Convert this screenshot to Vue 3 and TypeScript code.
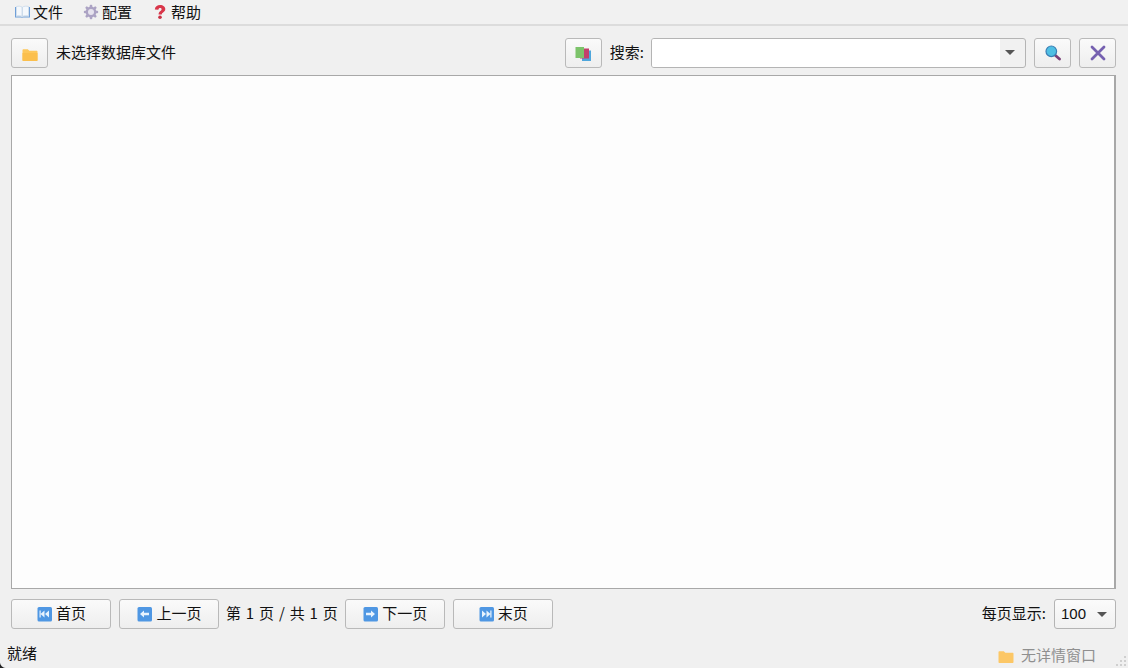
<script setup lang="ts">
const menus = [
  { label: '文件', icon: 'book' },
  { label: '配置', icon: 'gear' },
  { label: '帮助', icon: 'help' },
]
</script>

<template>
  <div class="win">
    <div class="menubar">
      <div v-for="m in menus" :key="m.label" class="menu-item">
        <svg v-if="m.icon === 'book'" class="ico" viewBox="0 0 16 16">
          <path d="M1 3v10.500h6.500l.5.5.5-.5H16V3h-1v9.500H9l-1 .6-1-.6H2V3z" fill="#6f9fd8" />
          <path d="M2.500 2.500c2-.5 4-.5 5.500.6V12.300c-1.600-.8-3.500-.8-5.500-.4zM14.500 2.500c-2-.5-4.500-.5-6 .6V12.300c1.600-.8 4-.8 6-.4z" fill="#f4f8fc" stroke="#c3d5e8" stroke-width=".7" />
        </svg>
        <svg v-else-if="m.icon === 'gear'" class="ico" viewBox="0 0 16 16">
          <g fill="#aca3c4">
            <circle cx="8" cy="8" r="5.400" />
            <rect x="6.700" y=".8" width="2.600" height="14.400" rx="1" />
            <rect x=".8" y="6.700" width="14.400" height="2.600" rx="1" />
            <rect x="6.700" y=".8" width="2.600" height="14.400" rx="1" transform="rotate(45 8 8)" />
            <rect x="6.700" y=".8" width="2.600" height="14.400" rx="1" transform="rotate(-45 8 8)" />
          </g>
          <circle cx="8" cy="8" r="3" fill="#e6e3ee" />
        </svg>
        <svg v-else class="ico" viewBox="0 0 16 16">
          <path d="M2.800 5.400C3 2.600 5.200 1 8.100 1c3 0 5.200 1.700 5.200 4 0 1.800-1 2.700-2.200 3.500-.9.600-1.300 1-1.300 2.100H6.600c0-1.900.6-2.800 1.700-3.600.8-.6 1.300-1 1.300-1.800 0-.8-.6-1.300-1.500-1.300-1 0-1.600.6-1.700 1.800z" fill="#d9364a" />
          <circle cx="8" cy="13.300" r="1.800" fill="#c92f43" />
        </svg>
        <span class="menu-text">{{ m.label }}</span>
      </div>
    </div>

    <div class="toolbar">
      <button class="btn square">
        <svg class="ico drop" viewBox="0 0 16 16"><path d="M.5 3.200c0-.6.4-1 1-1h4.300l1.500 1.500h7.200c.6 0 1 .4 1 1v8.300c0 .6-.4 1-1 1H1.500c-.6 0-1-.4-1-1z" fill="#fdc75b" /><path d="M.5 6h15v7c0 .6-.4 1-1 1h-13c-.6 0-1-.4-1-1z" fill="#fbbf4d" /></svg>
      </button>
      <span class="file-label txt">未选择数据库文件</span>
      <div class="spacer"></div>
      <button class="btn square">
        <svg class="ico drop-half" viewBox="0 0 16 16">
          <rect x="7" y="4.500" width="9" height="10.500" fill="#4ea6dc" />
          <rect x="5" y="2.500" width="9" height="10" fill="#c2406c" />
          <rect x=".5" y="1" width="8.500" height="11" fill="#7cc36a" />
        </svg>
      </button>
      <span class="search-label txt">搜索:</span>
      <div class="combo search">
        <div class="combo-field"></div>
        <div class="combo-arrow"></div>
      </div>
      <button class="btn square">
        <svg class="ico" viewBox="0 0 16 16">
          <path d="M10.500 10.500l4 3.500" stroke="#7a3f78" stroke-width="2.800" stroke-linecap="round" />
          <circle cx="6.300" cy="6.300" r="5.300" fill="#4fbfe4" stroke="#3a7fb5" stroke-width="1.200" />
        </svg>
      </button>
      <button class="btn square">
        <svg class="ico" viewBox="0 0 16 16"><path d="M2 2l12 12M14 2L2 14" stroke="#7560b0" stroke-width="2.800" stroke-linecap="round" /></svg>
      </button>
    </div>

    <div class="panel"></div>

    <div class="pager">
      <button class="btn page">
        <svg class="ico" viewBox="0 0 16 16"><rect x="1.500" y="1" width="14.500" height="14.500" rx="1.500" fill="#4f97e3" /><path d="M8.500 4.500L4.500 8l4 3.500zM13 4.500L9 8l4 3.500zM3.500 4.500h1.200v7H3.500z" fill="#e8f3fe" /></svg>
        <span class="txt">首页</span>
      </button>
      <button class="btn page">
        <svg class="ico" viewBox="0 0 16 16"><rect x="1.500" y="1" width="14.500" height="14.500" rx="1.500" fill="#4f97e3" /><path d="M8 4.500L4 8l4 3.500V9.300h5V6.700H8z" fill="#e8f3fe" /></svg>
        <span class="txt">上一页</span>
      </button>
      <span class="page-info txt">第 1 页 / 共 1 页</span>
      <button class="btn page">
        <svg class="ico" viewBox="0 0 16 16"><rect x="1.500" y="1" width="14.500" height="14.500" rx="1.500" fill="#4f97e3" /><path d="M9 4.500l4 3.500-4 3.500V9.300H4V6.700h5z" fill="#e8f3fe" /></svg>
        <span class="txt">下一页</span>
      </button>
      <button class="btn page">
        <svg class="ico" viewBox="0 0 16 16"><rect x="1.500" y="1" width="14.500" height="14.500" rx="1.500" fill="#4f97e3" /><path d="M4 4.500L8 8l-4 3.500zM8.500 4.500l4 3.500-4 3.500zM12.300 4.500h1.200v7h-1.200z" fill="#e8f3fe" /></svg>
        <span class="txt">末页</span>
      </button>
      <div class="spacer"></div>
      <span class="per-page txt">每页显示:</span>
      <div class="combo size">
        <span class="combo-value">100</span>
        <div class="combo-arrow plain"></div>
      </div>
    </div>

    <div class="statusbar">
      <span class="txt">就绪</span>
      <div class="spacer"></div>
      <div class="detail">
        <svg class="ico" viewBox="0 0 16 16"><path d="M.5 3.200c0-.6.4-1 1-1h4.300l1.500 1.500h7.200c.6 0 1 .4 1 1v8.300c0 .6-.4 1-1 1H1.500c-.6 0-1-.4-1-1z" fill="#fcc766" /></svg>
        <span class="txt">无详情窗口</span>
      </div>
      <div class="grip">
        <i v-for="n in 6" :key="n" :class="'g' + n"></i>
      </div>
    </div>
    <div class="corner"></div>
  </div>
</template>

<style>
html, body { margin: 0; padding: 0; background: #f0f0f0; }
</style>

<style scoped>
.win {
  position: relative;
  width: 1128px;
  height: 668px;
  overflow: hidden;
  display: flex;
  flex-direction: column;
  background: #f0f0f0;
  color: #111;
  font-family: "Noto Sans CJK SC", "Liberation Sans", sans-serif;
  font-size: 15px;
}
.ico { width: 16px; height: 16px; flex: none; display: block; }
.drop { margin-top: 3px; }
.drop-half { margin-top: 1px; }
.txt { padding-bottom: 3px; line-height: 20px; }
.menu-text { line-height: 20px; }
.spacer { flex: 1; }
.menubar {
  height: 24px;
  flex: none;
  display: flex;
  align-items: center;
  padding-left: 6px;
  gap: 4px;
  border-bottom: 2px solid #dcdcdc;
  background: #f1f1f1;
}
.menu-item {
  display: flex;
  align-items: center;
  gap: 3px;
  padding: 0 8px;
  height: 24px;
}
.toolbar {
  height: 30px;
  flex: none;
  margin-top: 12px;
  padding: 0 12px 0 11px;
  display: flex;
  align-items: center;
}
.btn {
  box-sizing: border-box;
  display: flex;
  align-items: center;
  justify-content: center;
  gap: 4px;
  height: 30px;
  padding: 0;
  border: 1px solid #b9b9b9;
  border-radius: 3px;
  background: linear-gradient(#fafafa, #eeeeee);
  color: inherit;
  font: inherit;
}
.square { width: 37px; }
.file-label { margin-left: 8px; }
.search-label { margin-left: 8px; }
.combo {
  box-sizing: border-box;
  display: flex;
  align-items: center;
  height: 30px;
  border: 1px solid #b4b4b4;
  border-radius: 3px;
}
.search { width: 375px; margin: 0 8px 0 7px; background: #f1f1f1; }
.combo-field {
  flex: 1;
  align-self: stretch;
  background: #fff;
  border-radius: 2px 0 0 2px;
}
.combo-arrow {
  width: 25px;
  height: 100%;
  position: relative;
  flex: none;
}
.combo-arrow::after {
  content: "";
  position: absolute;
  left: 5px;
  top: 11px;
  border-left: 5px solid transparent;
  border-right: 5px solid transparent;
  border-top: 5px solid #555;
}
.toolbar .square:nth-last-child(2) { margin-right: 8px; }
.panel {
  box-sizing: border-box;
  flex: none;
  height: 514px;
  margin: 7px 12px 0 11px;
  background: #fdfdfd;
  border: 1px solid #a8a8a8;
  border-right-width: 2px;
}
.pager {
  height: 30px;
  flex: none;
  margin-top: 10px;
  padding: 0 12px 0 11px;
  display: flex;
  align-items: center;
}
.page { width: 100px; margin-right: 8px; }
.page-info { margin: 0 7px 0 -1px; word-spacing: 1.5px; }
.per-page { margin-right: 8px; }
.size { width: 62px; background: linear-gradient(#fbfbfb, #f1f1f1); }
.combo-value { flex: 1; padding: 0 0 2px 6px; font-family: "Liberation Sans", sans-serif; font-size: 15px; }
.combo-arrow.plain::after { left: 7px; top: 12px; }
.statusbar {
  flex: 1;
  display: flex;
  align-items: center;
  padding: 12px 0 0 7px;
  position: relative;
}
.detail {
  display: flex;
  align-items: center;
  gap: 7px;
  color: #8f8f8f;
  margin-top: 4px;
  margin-right: 32px;
}
.grip {
  position: absolute;
  right: 2px;
  bottom: 2px;
  width: 12px;
  height: 12px;
}
.grip i { position: absolute; width: 2px; height: 2px; background: #cfcfcf; }
.g1 { right: 0; bottom: 0; }
.g2 { right: 4px; bottom: 0; }
.g3 { right: 8px; bottom: 0; }
.g4 { right: 0; bottom: 4px; }
.g5 { right: 4px; bottom: 4px; }
.g6 { right: 0; bottom: 8px; }
.corner {
  position: absolute;
  left: 0;
  bottom: 0;
  width: 6px;
  height: 6px;
  background: radial-gradient(circle at 6px 0, transparent 5.500px, #222 6.500px);
}
</style>
